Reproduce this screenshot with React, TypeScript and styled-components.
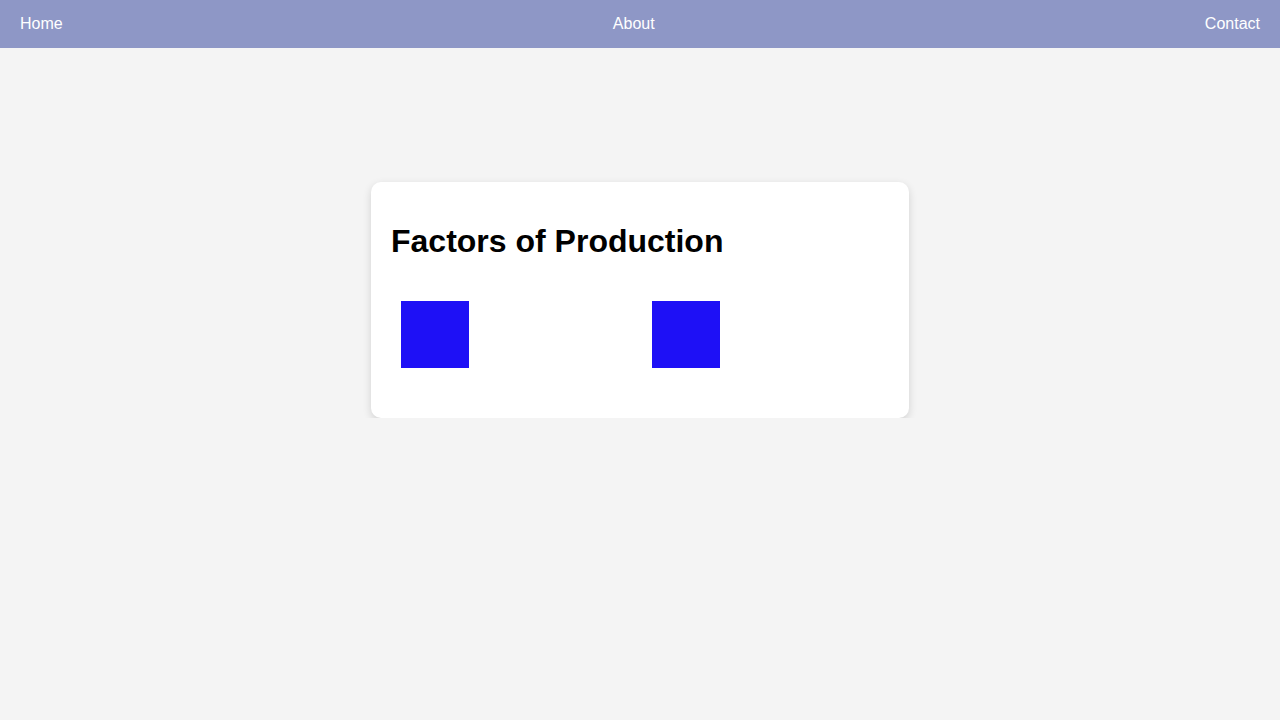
import React from 'react'
import styled, { createGlobalStyle } from 'styled-components'

const GlobalStyle = createGlobalStyle`
  body {
    margin: 0;
    background: #f4f4f4;
    font-family: 'Liberation Sans', Arial, sans-serif;
  }
`

const StyledNav = styled.nav`
  display: flex;
  justify-content: space-between;
  align-items: center;

  height: 48px;
  padding: 0 20px;

  background: #8e97c6;
`

const StyledNavLink = styled.a`
  color: #ffffff;
  font-size: 16px;
  text-decoration: none;
`

const StyledMain = styled.main`
  display: flex;
  justify-content: center;

  padding-top: 134px;
`

const StyledCard = styled.section`
  width: 498px;
  padding: 20px;

  border-radius: 10px;
  background: #ffffff;
  box-shadow: 0 3px 8px rgba(0, 0, 0, 0.14);
`

const StyledTitle = styled.h1`
  margin: 0;
  padding: 21px 0;

  color: #000000;
  font-size: 32px;
  font-weight: 700;
`

const StyledFactorGrid = styled.ul`
  display: grid;
  grid-template-columns: repeat(2, 1fr);
  column-gap: 4px;

  margin: 0;
  padding: 0 0 10px;

  list-style: none;
`

const StyledFactorItem = styled.li`
  padding: 20px 10px;
`

const StyledFactorIcon = styled.div<{ $color: string }>`
  width: 68px;
  height: 67px;

  background: ${p => p.$color};
`

const factors = [
  { name: 'land', color: '#1e10f6' },
  { name: 'labor', color: '#1e10f6' },
]

const App: React.FC = () => (
  <>
    <GlobalStyle />
    <StyledNav>
      <StyledNavLink href="#">Home</StyledNavLink>
      <StyledNavLink href="#">About</StyledNavLink>
      <StyledNavLink href="#">Contact</StyledNavLink>
    </StyledNav>
    <StyledMain>
      <StyledCard>
        <StyledTitle>Factors of Production</StyledTitle>
        <StyledFactorGrid>
          {factors.map(f => (
            <StyledFactorItem key={f.name}>
              <StyledFactorIcon $color={f.color} />
            </StyledFactorItem>
          ))}
        </StyledFactorGrid>
      </StyledCard>
    </StyledMain>
  </>
)

export default App
